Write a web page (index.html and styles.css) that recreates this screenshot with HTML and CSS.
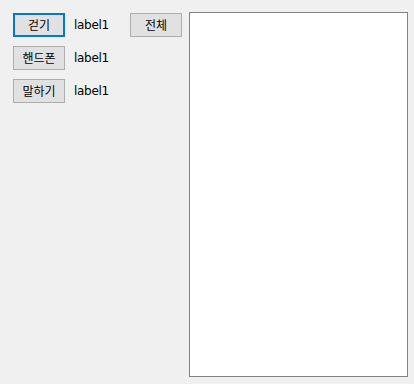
FILE: index.html
```html
<!DOCTYPE html>
<html lang="ko">
<head>
<meta charset="utf-8">
<link rel="stylesheet" href="styles.css">
</head>
<body>
<div class="form">
  <div class="controls">
    <button class="btn focused">걷기</button>
    <span class="label">label1</span>
    <button class="btn">전체</button>
    <button class="btn">핸드폰</button>
    <span class="label">label1</span>
    <span></span>
    <button class="btn">말하기</button>
    <span class="label">label1</span>
    <span></span>
  </div>
  <div class="listbox"></div>
</div>
</body>
</html>
```
FILE: styles.css
```css
html, body {
  margin: 0;
  padding: 0;
  background: #f0f0f0;
  width: 414px;
  height: 384px;
  overflow: hidden;
}
.form {
  display: flex;
  align-items: flex-start;
  padding: 12px 0 0 13px;
  font-family: "Noto Sans CJK KR", "Liberation Sans", sans-serif;
  font-size: 12px;
  color: #000;
}
.controls {
  display: grid;
  grid-template-columns: 52px 47px 52px;
  grid-auto-rows: 24px;
  column-gap: 9px;
  row-gap: 9px;
  margin-top: 1px;
}
.btn {
  box-sizing: border-box;
  width: 52px;
  height: 24px;
  margin: 0;
  padding: 0;
  background: #e1e1e1;
  border: 1px solid #adadad;
  font-family: "Noto Sans CJK KR", sans-serif;
  font-size: 12px;
  line-height: 1;
  color: #000;
}
.btn.focused {
  border: 2px solid #0078d7;
}
.label {
  display: flex;
  align-items: center;
  font-family: "DejaVu Sans", sans-serif;
  font-size: 12px;
  letter-spacing: -0.3px;
}
.listbox {
  box-sizing: border-box;
  margin-left: 7px;
  width: 219px;
  height: 365px;
  background: #fff;
  border: 1px solid #828282;
}
```
